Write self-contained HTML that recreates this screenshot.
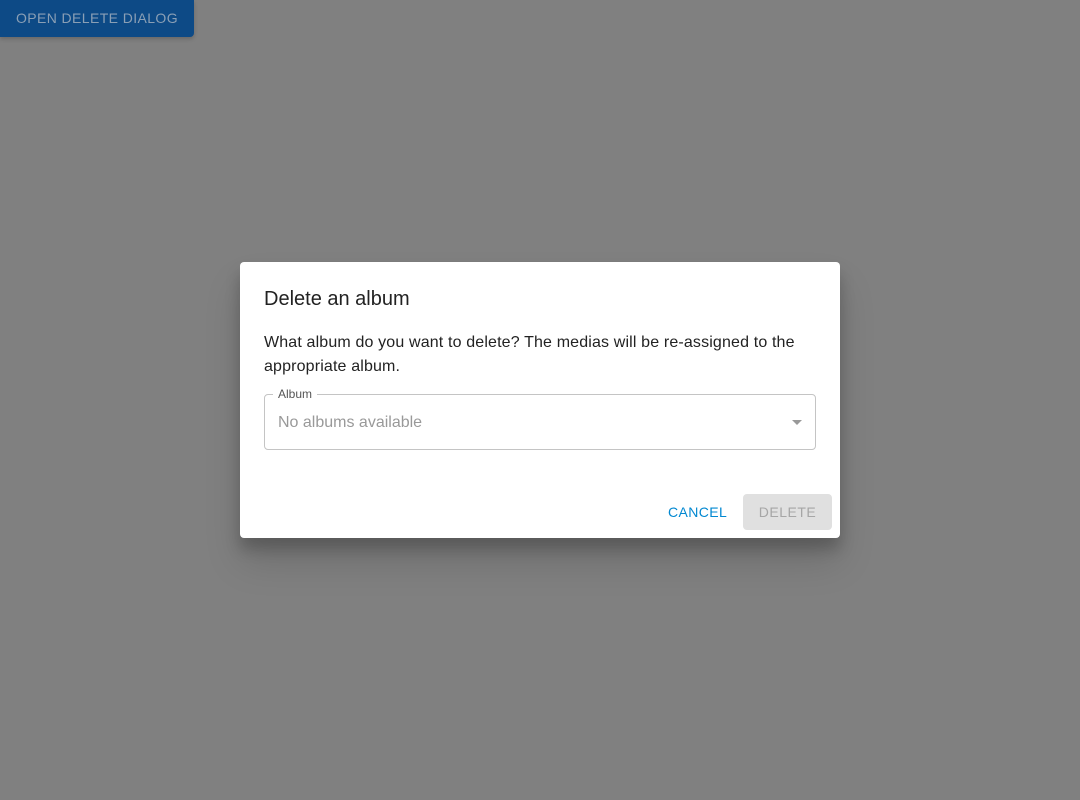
<!DOCTYPE html>
<html><head><style>
body{margin:0;width:1080px;height:800px;background:#808080;font-family:"Liberation Sans",sans-serif;position:relative;overflow:hidden}
.btn{position:absolute;left:0;top:0;width:194px;height:37px;background:#0d4a86;color:#8a9fb5;font-size:14px;letter-spacing:.4px;line-height:37px;text-align:center;border-radius:0 0 4px 0;box-shadow:0 2px 4px rgba(0,0,0,.2)}
.dlg{position:absolute;left:240px;top:262px;width:600px;height:276px;background:#fff;border-radius:4px;box-shadow:0 11px 15px rgba(0,0,0,.2),0 24px 38px rgba(0,0,0,.14)}
.t{position:absolute;left:24px;top:26px;font-size:20px;color:#222}
.p{position:absolute;left:24px;top:69px;width:552px;font-size:16px;line-height:24px;color:#222;letter-spacing:.15px}
.f{position:absolute;left:24px;top:132px;width:550px;height:54px;border:1px solid #c4c4c4;border-radius:4px}
.lab{position:absolute;left:8px;top:-8px;background:#fff;padding:0 5px;font-size:12px;color:#555}
.ph{position:absolute;left:13px;top:19px;font-size:16px;color:#999}
.ar{position:absolute;right:13px;top:25px;width:0;height:0;border-left:5px solid transparent;border-right:5px solid transparent;border-top:5px solid #999}
.c{position:absolute;left:428px;top:242px;font-size:14px;color:#0288d1;letter-spacing:.4px}
.d{position:absolute;left:503px;top:232px;width:89px;height:36px;background:#e0e0e0;border-radius:4px;color:#a6a6a6;font-size:14px;line-height:36px;text-align:center;letter-spacing:.5px}
</style></head><body>
<div class="btn">OPEN DELETE DIALOG</div>
<div class="dlg">
<div class="t">Delete an album</div>
<div class="p">What album do you want to delete? The medias will be re-assigned to the appropriate album.</div>
<div class="f"><span class="lab">Album</span><span class="ph">No albums available</span><span class="ar"></span></div>
<div class="c">CANCEL</div>
<div class="d">DELETE</div>
</div>
</body></html>
